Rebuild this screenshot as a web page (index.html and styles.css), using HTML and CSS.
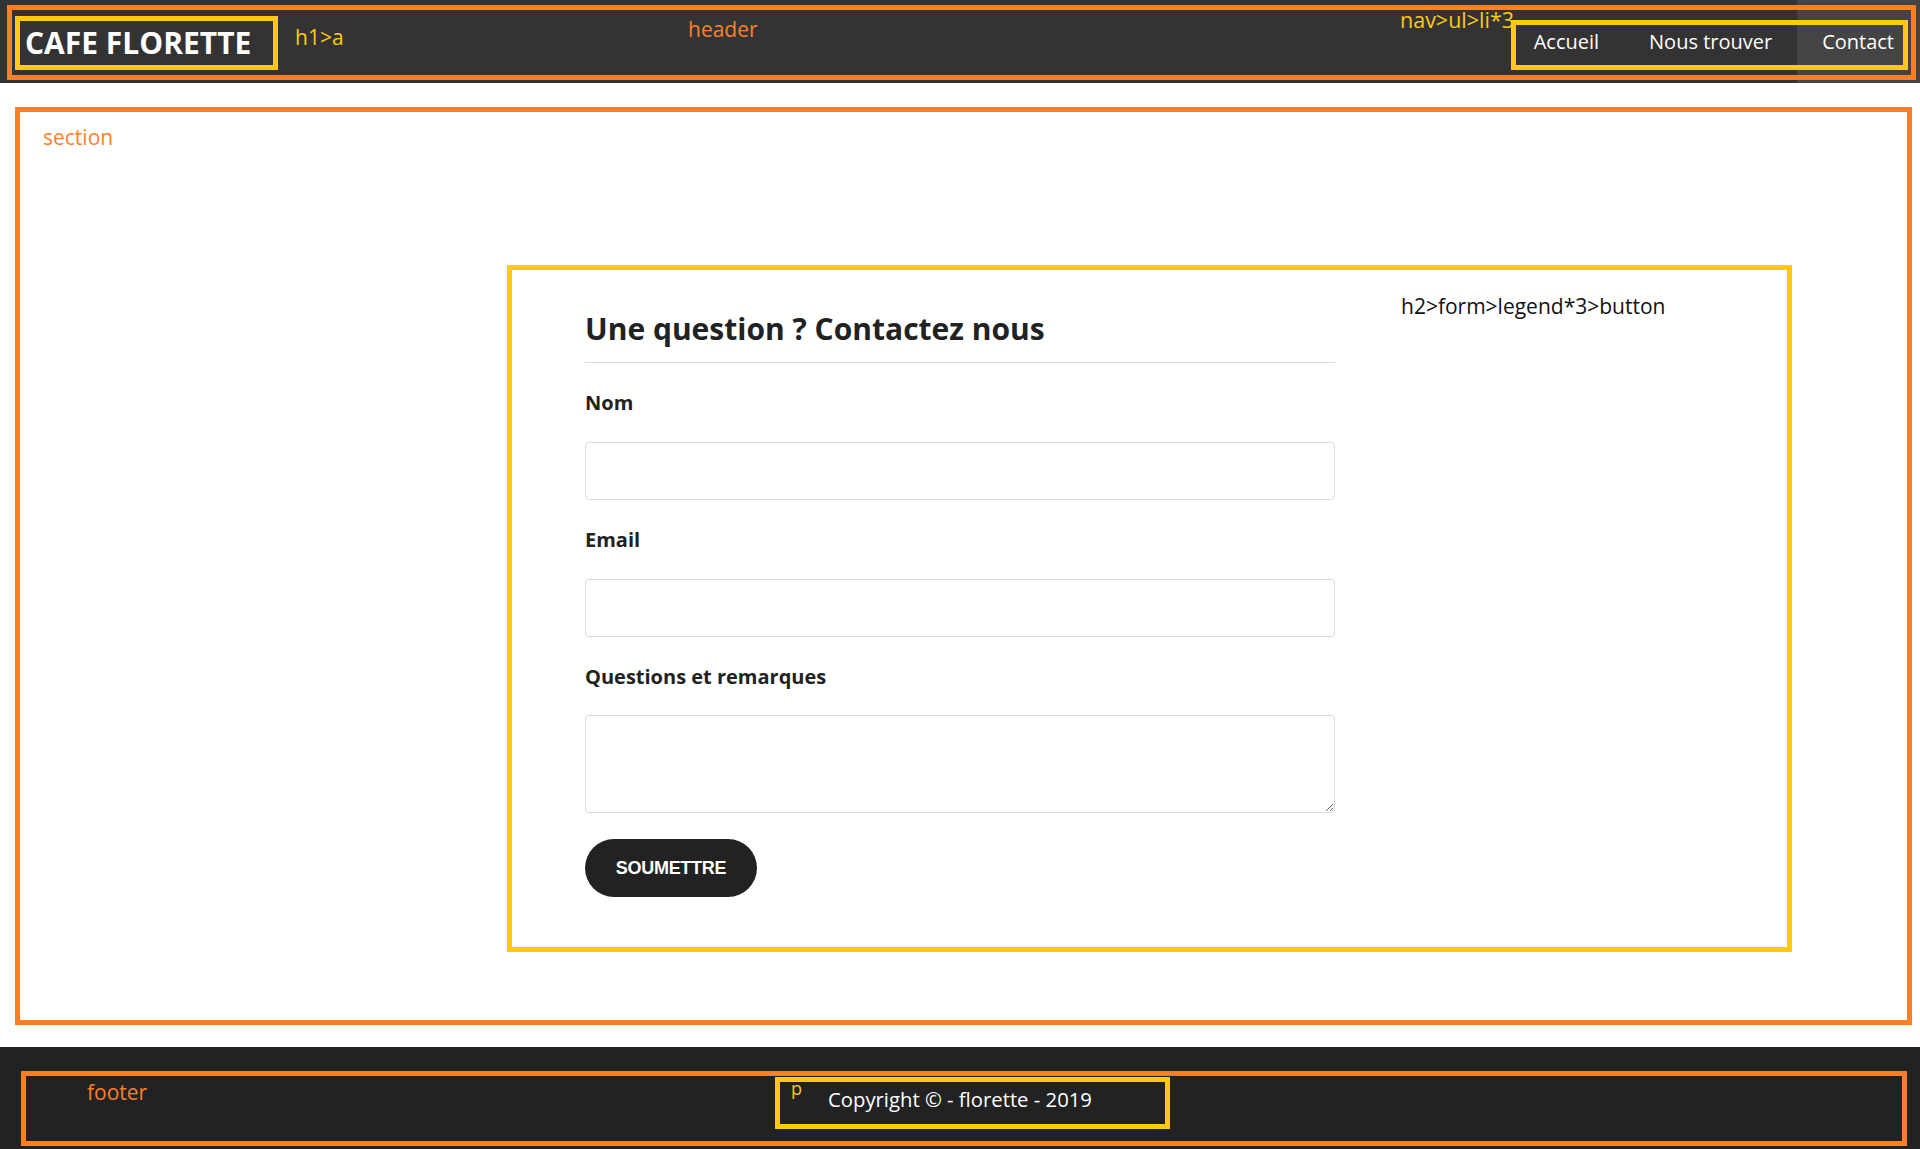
FILE: index.html
```html
<!DOCTYPE html>
<html lang="fr">
<head>
<meta charset="utf-8">
<title>Cafe Florette - Contact</title>
<link rel="stylesheet" href="styles.css">
</head>
<body>
<header class="site-header">
  <span class="mark-frame"></span>
  <h1 class="logo"><a href="#">CAFE FLORETTE</a></h1>
  <span class="note note-h1">h1&gt;a</span>
  <span class="note note-header">header</span>
  <span class="note note-nav">nav&gt;ul&gt;li*3</span>
  <nav class="main-nav">
    <ul>
      <li><a href="#">Accueil</a></li>
      <li><a href="#">Nous trouver</a></li>
      <li class="active"><a href="#">Contact</a></li>
    </ul>
  </nav>
  <span class="nav-box"></span>
</header>

<main class="page">
  <section class="section-frame">
    <span class="note note-section">section</span>
    <div class="card">
      <span class="note note-form">h2&gt;form&gt;legend*3&gt;button</span>
      <h2 class="card-title">Une question ? Contactez nous</h2>
      <form class="contact-form">
        <label for="nom">Nom</label>
        <input id="nom" type="text">
        <label for="email">Email</label>
        <input id="email" type="email">
        <label for="msg">Questions et remarques</label>
        <textarea id="msg"></textarea>
        <button type="button">SOUMETTRE</button>
      </form>
    </div>
  </section>
</main>

<footer class="site-footer">
  <div class="footer-frame">
    <span class="note note-footer">footer</span>
    <p class="copy"><span class="note note-p">p</span>Copyright &copy; - florette - 2019</p>
  </div>
</footer>
</body>
</html>
```

FILE: styles.css
```css
* { box-sizing: border-box; }

html, body {
  margin: 0;
  padding: 0;
  background: #fff;
  font-family: "Open Sans", "Noto Sans", sans-serif;
  color: #222;
}

.note {
  position: absolute;
  font-size: 21px;
  line-height: 24px;
  white-space: nowrap;
}

/* HEADER */
.site-header {
  position: relative;
  height: 83px;
  background: #333;
  display: flex;
  justify-content: space-between;
  align-items: flex-start;
}

.mark-frame {
  position: absolute;
  left: 7px;
  top: 5px;
  width: 1909px;
  height: 75px;
  border: 5px solid #ff7f27;
  pointer-events: none;
  z-index: 2;
}

.logo {
  margin: 16px 0 0 15px;
  font-size: 30px;
  font-weight: 700;
}

.logo a {
  display: block;
  width: 263px;
  height: 54px;
  border: 5px solid #ffc90e;
  padding-left: 5px;
  line-height: 44px;
  color: #fff;
  text-decoration: none;
}

.note-h1 { left: 295px; top: 25px; color: #ffc90e; }
.note-header { left: 688px; top: 17px; color: #ff7f27; }
.note-nav { left: 1400px; top: 8px; font-size: 21.5px; color: #ffc90e; z-index: 3; }

.main-nav ul {
  display: flex;
  margin: 0;
  padding: 0;
  list-style: none;
}

.main-nav a {
  display: block;
  padding: 0 25px;
  line-height: 83px;
  font-size: 20px;
  color: #fff;
  text-decoration: none;
}

.main-nav .active a { background: #444; padding-right: 26px; }

.nav-box {
  position: absolute;
  left: 1511px;
  top: 20px;
  width: 397px;
  height: 50px;
  border: 5px solid #ffc90e;
  pointer-events: none;
  z-index: 2;
}

/* MAIN */
.page {
  height: 964px;
  padding: 24px 8px 0 15px;
}

.section-frame {
  position: relative;
  height: 918px;
  border: 5px solid #ff7f27;
  padding: 153px 115px 0 487px;
}

.note-section { left: 23px; top: 13px; color: #ff7f27; }

.card {
  position: relative;
  border: 5px solid #ffc90e;
  padding: 41px 0 50px 73px;
}

.note-form { left: 889px; top: 24px; color: #111; }

.card-title {
  width: 750px;
  margin: 0;
  font-size: 30px;
  line-height: 36px;
  font-weight: 700;
  color: #222;
  padding-bottom: 15px;
  border-bottom: 1px solid #dedede;
}

.contact-form {
  width: 750px;
  display: flex;
  flex-direction: column;
  align-items: flex-start;
}

.contact-form label {
  margin: 27px 0 25px;
  font-size: 20px;
  line-height: 26px;
  font-weight: 700;
  color: #222;
}

.contact-form input,
.contact-form textarea {
  width: 100%;
  height: 58px;
  border: 1px solid #dcdcdc;
  border-radius: 4px;
  background: #fff;
  font: inherit;
  margin: 0;
}

.contact-form input { margin-top: 1px; }

.contact-form textarea {
  height: 98px;
  resize: vertical;
}

.contact-form button {
  margin-top: 26px;
  width: 172px;
  height: 58px;
  border: none;
  border-radius: 29px;
  background: #222;
  color: #fff;
  font-family: "Liberation Sans", Arial, sans-serif;
  font-weight: 700;
  font-size: 18px;
  letter-spacing: -0.3px;
}

/* FOOTER */
.site-footer {
  height: 102px;
  background: #222;
  padding: 24px 13px 0 21px;
}

.footer-frame {
  position: relative;
  height: 75px;
  border: 5px solid #ff7f27;
  padding: 1px 0 0 749px;
}

.note-footer { left: 61px; top: 4px; color: #ff7f27; }

.copy {
  position: relative;
  margin: 0;
  width: 395px;
  height: 52px;
  border: 5px solid #ffc90e;
  padding-left: 48px;
  font-size: 20.3px;
  line-height: 34px;
  color: #fff;
}

.note-p { left: 11px; top: -6px; font-size: 18px; color: #ffc90e; }
```
